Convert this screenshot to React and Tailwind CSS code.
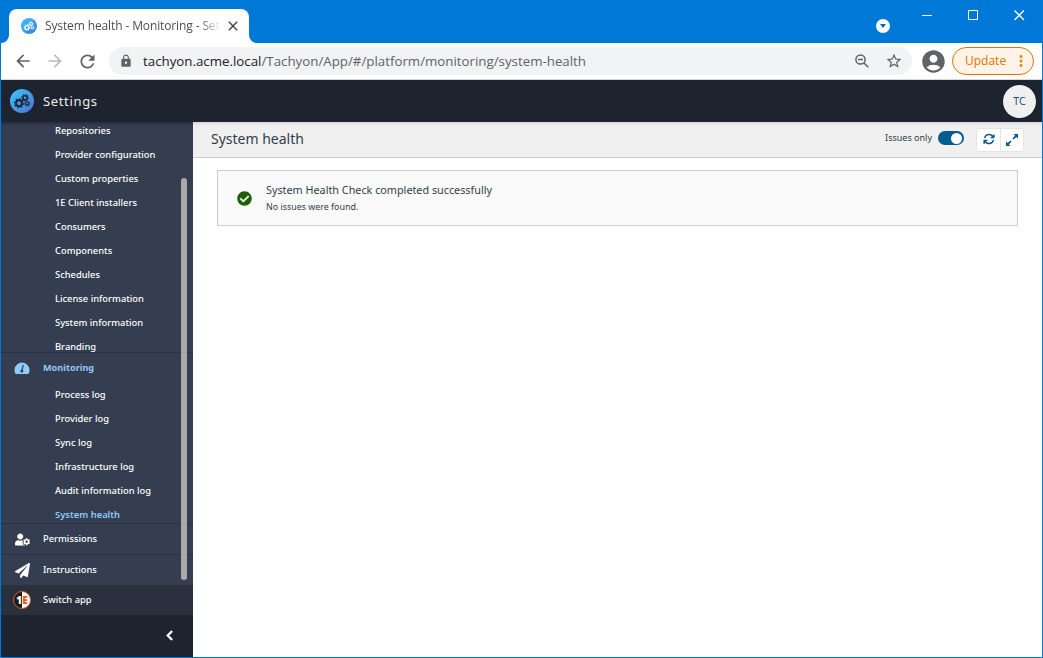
import React from "react";
import { FaCheckCircle, FaUserCog, FaPaperPlane, FaChevronLeft } from "react-icons/fa";
import { FaArrowsRotate } from "react-icons/fa6";
import { MdArrowBack, MdArrowForward, MdRefresh, MdLock, MdStarBorder, MdAccountCircle, MdMoreVert, MdClose } from "react-icons/md";

const settingsItems = ["Repositories", "Provider configuration", "Custom properties", "1E Client installers", "Consumers", "Components", "Schedules", "License information", "System information", "Branding"];
const monitoringItems = ["Process log", "Provider log", "Sync log", "Infrastructure log", "Audit information log", "System health"];

// Three meshed gears; each is a solid ring with a dashed ring of teeth outside it.
function Gears({ className }) {
  return (
    <svg className={className} viewBox="0 0 24 24" fill="none" stroke="currentColor">
      <circle cx="9" cy="14.200" r="2.900" strokeWidth="1.900" />
      <circle cx="9" cy="14.200" r="4.300" strokeWidth="1.500" pathLength="16" strokeDasharray="1 1" />
      <circle cx="15" cy="8.800" r="2.100" strokeWidth="1.500" />
      <circle cx="15" cy="8.800" r="3.200" strokeWidth="1.200" pathLength="16" strokeDasharray="1 1" />
      <circle cx="17.200" cy="14.600" r="1.600" strokeWidth="1.200" />
      <circle cx="17.200" cy="14.600" r="2.500" strokeWidth="1" pathLength="16" strokeDasharray="1 1" />
    </svg>
  );
}

function SubItem({ label, active }) {
  return (
    <div className={"flex h-6 items-center pl-[54px] text-[9.35px] whitespace-nowrap " + (active ? "font-semibold tracking-[0.02px] text-[#90caf9]" : "font-medium text-white")}>
      {label}
    </div>
  );
}

function TabBar() {
  return (
    <div className="flex h-[42px] items-start bg-[#0078d7]">
      <div className="relative mt-2 ml-2 flex h-[34px] w-[240px] items-center rounded-t-lg bg-white pl-3">
        <svg className="absolute bottom-0 -left-2 h-2 w-2" viewBox="0 0 8 8"><path d="M8 0v8H0A8 8 0 0 0 8 0Z" fill="#fff" /></svg>
        <svg className="absolute -right-2 bottom-0 h-2 w-2" viewBox="0 0 8 8"><path d="M0 0v8h8A8 8 0 0 1 0 0Z" fill="#fff" /></svg>
        <span className="flex h-4 w-4 shrink-0 items-center justify-center rounded-full bg-linear-to-br from-[#35c4ff] to-[#3f79d0]">
          <Gears className="h-4 w-4 text-white" />
        </span>
        <span className="ml-2 w-[176px] bg-linear-to-r from-[#45494d] from-88% to-transparent bg-clip-text font-['Open_Sans',sans-serif] text-[12px] tracking-[-0.12px] whitespace-nowrap text-transparent">
          System health - Monitoring - Sett
        </span>
        <MdClose className="ml-1 shrink-0 text-[16px] text-[#3c4043]" />
      </div>
      <div className="flex-1" />
      <div className="mt-[18px] flex h-[14px] w-[14px] items-center justify-center rounded-full bg-white">
        <svg width="6" height="4" viewBox="0 0 6 4"><path d="M0 0h6L3 4Z" fill="#0067c0" /></svg>
      </div>
      <svg className="mt-[9px] mr-[17px] ml-[32px]" width="103" height="11" viewBox="0 0 103 11" fill="none" stroke="#fff">
        <path d="M0 5.500h10M46.500 .5h9v9h-9z" />
        <path d="M92.500.5l9.500 9.500M102 .5l-9.500 9.500" strokeWidth="1.300" />
      </svg>
    </div>
  );
}

function Toolbar() {
  return (
    <div className="flex h-[37px] items-center border-b border-[#d5d7da] bg-white pl-[12px] font-['Open_Sans',sans-serif]">
      <MdArrowBack className="text-[20px] text-[#5f6368]" />
      <MdArrowForward className="ml-[12px] text-[20px] text-[#babcbe]" />
      <MdRefresh className="ml-[12px] text-[21px] text-[#5f6368]" />
      <div className="ml-[11px] flex h-7 w-[803px] items-center rounded-full bg-[#f1f3f4] pr-[9px] pl-[10px]">
        <MdLock className="text-[14px] text-[#5f6368]" />
        <span className="relative top-[0.5px] ml-[10px] text-[13.300px] whitespace-nowrap text-[#5f6368]">
          <span className="text-[#202124]">tachyon.acme.local</span>/Tachyon/App/#/platform/monitoring/system-health
        </span>
        <svg className="ml-auto" width="14" height="14" viewBox="0 0 14 14" fill="none" stroke="#5f6368" strokeWidth="1.500">
          <circle cx="5.500" cy="5.500" r="4.600" />
          <path d="M9 9l4.300 4.300M3 5.500h5" />
        </svg>
        <MdStarBorder className="ml-[16px] text-[18px] text-[#5f6368]" />
      </div>
      <MdAccountCircle className="ml-[8px] shrink-0 text-[27px] text-[#5f6368]" />
      <div className="ml-[5px] flex h-7 w-[82px] items-center rounded-full border border-[#e37400] bg-[#fdf3e9] pl-3">
        <span className="text-[12px] text-[#e37400]">Update</span>
        <MdMoreVert className="mr-[3px] ml-auto text-[18px] text-[#e88b0c]" />
      </div>
    </div>
  );
}

function Sidebar() {
  return (
    <aside className="relative flex w-[192px] shrink-0 flex-col bg-[#343e50]">
      <div className="flex h-[231px] flex-col justify-end overflow-hidden border-b border-[#293242]">
        <div className="-mb-[7px]">{settingsItems.map((t) => <SubItem key={t} label={t} />)}</div>
      </div>
      <div className="flex h-[30px] items-center pl-[13px]">
        <svg width="16" height="14" viewBox="0 0 16 14">
          <path d="M1.600 13A7.500 7.500 0 1 1 14.400 13Z" fill="#90caf9" />
          <path d="M9.300 4 8 9.500" stroke="#343e50" strokeWidth="1.200" />
          <circle cx="7.800" cy="10" r="1.500" fill="#343e50" />
        </svg>
        <span className="ml-[13px] text-[9.15px] font-bold text-[#90caf9]">Monitoring</span>
      </div>
      <div className="h-[141px] border-b border-[#293242]">
        {monitoringItems.map((t) => <SubItem key={t} label={t} active={t === "System health"} />)}
      </div>
      <div className="flex h-[31px] items-center border-b border-[#293242] pl-[14px] text-[9.35px] font-medium text-white">
        <FaUserCog className="text-[15px]" />
        <span className="ml-[13px]">Permissions</span>
      </div>
      <div className="flex h-[30px] items-center pl-[14px] text-[9.35px] font-medium text-white">
        <FaPaperPlane className="text-[15px]" />
        <span className="ml-[13px]">Instructions</span>
      </div>
      <div className="flex h-[30px] items-center bg-[#2a303e] pl-[12px] text-[9.35px] font-medium text-white">
        <span className="flex h-[18px] w-[18px] items-center justify-center rounded-full border border-[#d8602b] bg-linear-to-r from-[#191b20] from-50% to-white to-50% text-[10px] leading-none font-black">
          <span>1</span><span className="text-[#e65a1e]">E</span>
        </span>
        <span className="ml-[12px]">Switch app</span>
      </div>
      <div className="flex flex-1 items-center justify-end bg-[#1e2330] pr-[18px]">
        <FaChevronLeft className="mb-px text-[11px] text-white" stroke="currentColor" strokeWidth="35" />
      </div>
      <div className="absolute top-[56px] left-[180px] h-[402px] w-[6px] rounded-full bg-[#a9a9a9]" />
      <div className="pointer-events-none absolute inset-x-0 top-0 h-[4px] bg-linear-to-b from-black/25 to-transparent" />
    </aside>
  );
}

export default function App() {
  return (
    <div className="flex h-[658px] w-[1043px] flex-col overflow-hidden border border-[#0078d7] bg-white font-['Noto_Sans',sans-serif] leading-normal">
      <TabBar />
      <Toolbar />
      <header className="flex h-[42px] shrink-0 items-center bg-[#1e2330] pr-[6px] pl-[9px]">
        <span className="flex h-6 w-6 items-center justify-center rounded-full bg-linear-to-br from-[#35c8ff] to-[#4a70cf]">
          <Gears className="h-6 w-6 text-[#1e2330]" />
        </span>
        <span className="ml-[9px] pt-[2px] text-[13px] tracking-[0.65px] text-[#eeeeee]">Settings</span>
        <span className="ml-auto flex h-[33px] w-[33px] items-center justify-center rounded-full bg-[#f0f0f0] pt-px text-[10.500px] text-[#174d7e]">TC</span>
      </header>
      <div className="flex min-h-0 flex-1">
        <Sidebar />
        <main className="min-w-0 flex-1">
          <div className="flex h-[36px] items-center border-b border-[#cccccc] bg-linear-to-b from-[#d8d8d8] to-[#f0f0f0] to-[4px] pr-[18px] pb-[2px] pl-[18px]">
            <h1 className="text-[14px] text-[#323d4d]">System health</h1>
            <span className="mb-[2px] ml-auto text-[9px] text-[#323d4d]">Issues only</span>
            <span className="mb-px ml-[6px] flex h-[14px] w-[26px] items-center justify-end rounded-full bg-[#065a92] pr-[2px]">
              <span className="h-[11px] w-[11px] rounded-full bg-white" />
            </span>
            <div className="mt-[2px] ml-[12px] flex h-[24px] w-[48px] overflow-hidden rounded-[3px] border border-[#e4e4e4] bg-white text-[#065a92]">
              <span className="flex w-[24px] items-center justify-center border-r border-[#e4e4e4] pb-px"><FaArrowsRotate className="text-[12px]" /></span>
              <span className="flex flex-1 items-center justify-center">
                <svg width="12" height="12" viewBox="0 0 12 12" fill="currentColor"><path d="M7.500 0H12v4.500L10.400 2.900 7.500 5.600 6.400 4.500 9.100 1.600ZM4.500 12H0V7.500l1.600 1.600 2.900-2.700 1.100 1.100-2.700 2.900Z" /></svg>
              </span>
            </div>
          </div>
          <section className="mt-[12px] mr-[24px] ml-[24px] flex h-[56px] items-center border border-[#cccccc] bg-[#fafafa] pl-[19px]">
            <FaCheckCircle className="text-[15px] text-[#1d6100]" />
            <div className="ml-[14px] text-[#323d4d]">
              <div className="-mt-px mb-px text-[10.800px] leading-[17px]">System Health Check completed successfully</div>
              <div className="text-[8.900px] leading-[16px]">No issues were found.</div>
            </div>
          </section>
        </main>
      </div>
    </div>
  );
}
